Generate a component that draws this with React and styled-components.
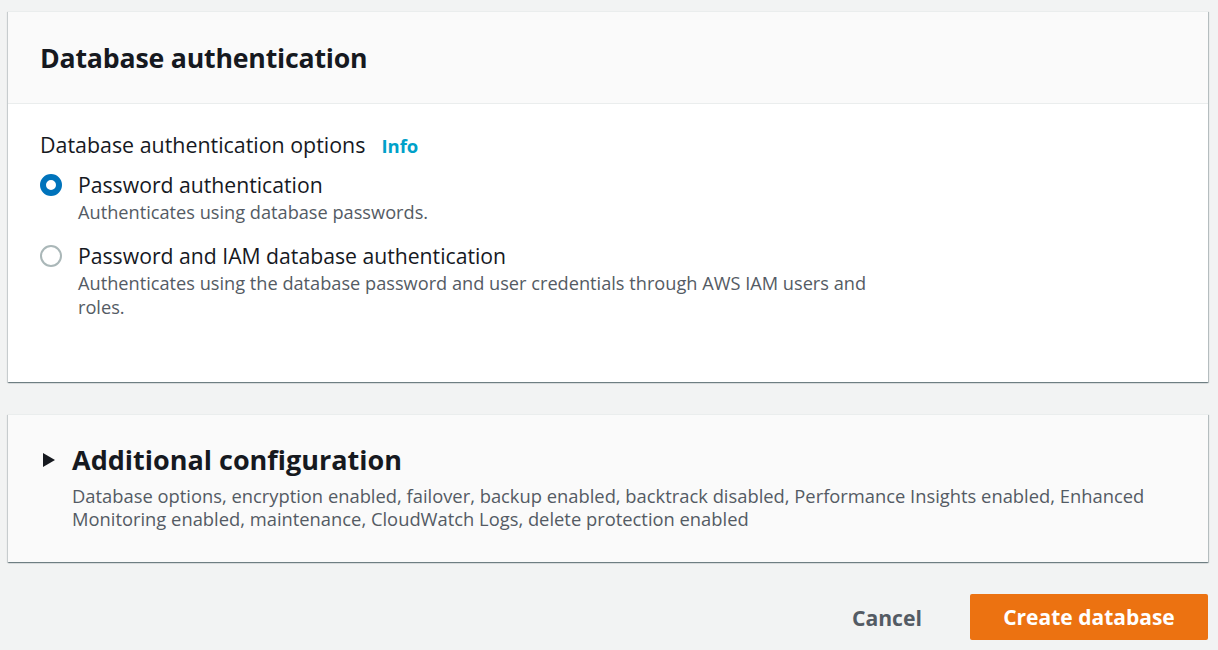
import React from "react";
import styled, { createGlobalStyle } from "styled-components";

const Global = createGlobalStyle`
  html, body { margin: 0; padding: 0; background: #f2f3f3; }
  body { font-family: "Open Sans", "Noto Sans", sans-serif; color: #16191f; -webkit-font-smoothing: antialiased; }
  * { box-sizing: border-box; }
`;

const Page = styled.div`
  width: 1218px;
  height: 650px;
  padding: 11px 10px 0 8px;
  display: flex;
  flex-direction: column;
  gap: 32px;
  overflow: hidden;
`;

const Card = styled.section`
  width: 1200px;
  background: ${(p) => p.$bg || "#ffffff"};
  box-shadow: 0 1px 1px 0 rgba(0, 28, 36, 0.35), 1px 1px 1px 0 rgba(0, 28, 36, 0.2),
    -1px 1px 1px 0 rgba(0, 28, 36, 0.12);
  border-top: 1px solid #eaeded;
`;

const CardHeader = styled.header`
  height: 92px;
  background: #fafafa;
  border-bottom: 1px solid #eaeded;
  display: flex;
  align-items: center;
  padding: 0 32px;
`;

const Heading = styled.h2`
  margin: 0;
  font-size: 26.7px;
  font-weight: 700;
  letter-spacing: -0.2px;
  color: #16191f;
`;

const CardBody = styled.div`
  height: 278px;
  padding: 26px 32px 0;
  display: flex;
  flex-direction: column;
`;

const FieldLabel = styled.div`
  font-size: 21.4px;
  line-height: 30px;
  color: #16191f;
  display: flex;
  align-items: baseline;
  gap: 16px;
`;

const InfoLink = styled.a`
  font-size: 18.5px;
  font-weight: 700;
  color: #00a1c9;
  text-decoration: none;
`;

const RadioGroup = styled.div`
  display: flex;
  flex-direction: column;
  gap: 17px;
  margin-top: 9px;
`;

const RadioRow = styled.label`
  display: grid;
  grid-template-columns: 22px 1fr;
  column-gap: 16px;
  align-items: start;
`;

const RadioDot = styled.span`
  width: 22px;
  height: 22px;
  border-radius: 50%;
  margin-top: 4px;
  background: #ffffff;
  border: ${(p) => (p.$checked ? "6.5px solid #0073bb" : "2px solid #aab7b8")};
`;

const RadioText = styled.div`
  display: flex;
  flex-direction: column;
  max-width: 820px;
`;

const RadioLabel = styled.span`
  font-size: 21.2px;
  line-height: 30px;
  color: #16191f;
`;

const Description = styled.span`
  font-size: 18.2px;
  line-height: 24px;
  color: #545b64;
`;

const ExpandHeader = styled.div`
  padding: 26px 32px 0 34px;
  display: grid;
  grid-template-columns: 14px 1fr;
  column-gap: 16px;
  align-items: start;
  height: 147px;
`;

const Caret = styled.svg`
  width: 14px;
  height: 16px;
  margin-top: 11px;
`;

const ExpandTitle = styled.h2`
  margin: 0;
  font-size: 27px;
  line-height: 38px;
  font-weight: 700;
  color: #16191f;
`;

const ExpandDesc = styled.p`
  margin: 5px 0 0;
  font-size: 18.35px;
  line-height: 23px;
  color: #545b64;
  max-width: 1090px;
`;

const Footer = styled.div`
  display: flex;
  justify-content: flex-end;
  align-items: center;
  gap: 48px;
`;

const LinkButton = styled.button`
  border: none;
  background: transparent;
  font-family: inherit;
  font-size: 21.2px;
  font-weight: 700;
  color: #545b64;
  padding: 0;
  cursor: pointer;
`;

const PrimaryButton = styled.button`
  width: 238px;
  height: 46px;
  border: none;
  border-radius: 2px;
  background: #ec7211;
  color: #ffffff;
  font-family: inherit;
  font-size: 21px;
  font-weight: 700;
  cursor: pointer;
`;

export default function App() {
  return (
    <>
      <Global />
      <Page>
        <Card>
          <CardHeader>
            <Heading>Database authentication</Heading>
          </CardHeader>
          <CardBody>
            <FieldLabel>
              Database authentication options <InfoLink href="#">Info</InfoLink>
            </FieldLabel>
            <RadioGroup>
              <RadioRow>
                <RadioDot $checked />
                <RadioText>
                  <RadioLabel>Password authentication</RadioLabel>
                  <Description>Authenticates using database passwords.</Description>
                </RadioText>
              </RadioRow>
              <RadioRow>
                <RadioDot />
                <RadioText>
                  <RadioLabel>Password and IAM database authentication</RadioLabel>
                  <Description>
                    Authenticates using the database password and user credentials through AWS IAM users and
                    roles.
                  </Description>
                </RadioText>
              </RadioRow>
            </RadioGroup>
          </CardBody>
        </Card>
        <Card $bg="#fafafa">
          <ExpandHeader>
            <Caret viewBox="0 0 14 16">
              <path d="M1 1 L13 8 L1 15 Z" fill="#16191f" />
            </Caret>
            <div>
              <ExpandTitle>Additional configuration</ExpandTitle>
              <ExpandDesc>
                Database options, encryption enabled, failover, backup enabled, backtrack disabled, Performance
                Insights enabled, Enhanced Monitoring enabled, maintenance, CloudWatch Logs, delete protection
                enabled
              </ExpandDesc>
            </div>
          </ExpandHeader>
        </Card>
        <Footer>
          <LinkButton>Cancel</LinkButton>
          <PrimaryButton>Create database</PrimaryButton>
        </Footer>
      </Page>
    </>
  );
}
